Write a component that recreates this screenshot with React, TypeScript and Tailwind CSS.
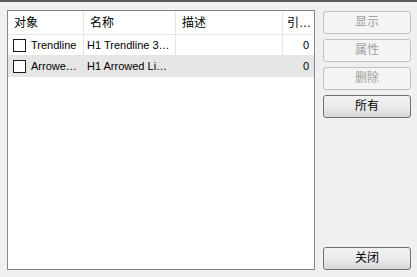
const FONT = "[font-family:Tahoma,'Liberation_Sans','Noto_Sans_CJK_SC',sans-serif]";

const ROWS = [
  { obj: "Trendline", name: "H1 Trendline 3…", desc: "", ref: "0", selected: false },
  { obj: "Arrowe…", name: "H1 Arrowed Li…", desc: "", ref: "0", selected: true }
];

const BUTTONS = [
  { label: "显示", enabled: false },
  { label: "属性", enabled: false },
  { label: "删除", enabled: false },
  { label: "所有", enabled: true }
];

export default function App() {
  return (
    <div
      className={`flex h-[277px] w-[417px] flex-col overflow-hidden border-t-2 border-[#5a5a5a] bg-[#f0f0f0] text-[12px] text-black ${FONT}`}
    >
      <div className="flex flex-1 gap-2 pt-2 pr-[6px] pb-[7px] pl-[7px]">
        <ObjectList />
        <div className="flex w-[88px] flex-col gap-[5px] pt-[1px]">
          {BUTTONS.map((b) => (
            <DialogButton key={b.label} label={b.label} enabled={b.enabled} />
          ))}
          <div className="flex-1" />
          <DialogButton label="关闭" enabled />
        </div>
      </div>
    </div>
  );
}

function ObjectList() {
  return (
    <div className="flex w-[308px] flex-col border border-[#828790] bg-white">
      <div className="flex h-[24px] border-b border-[#e5e5e5] leading-[24px]">
        <div className="w-[76px] border-r border-[#e5e5e5] pl-[6px]">对象</div>
        <div className="w-[92px] border-r border-[#e5e5e5] pl-[6px]">名称</div>
        <div className="w-[107px] border-r border-[#e5e5e5] pl-[6px]">描述</div>
        <div className="w-[31px] overflow-hidden text-ellipsis whitespace-nowrap pr-[2px] pl-[4px]">引用计数</div>
      </div>
      {ROWS.map((row) => (
        <div
          key={row.obj}
          className={`flex h-[21px] border-b border-[#e5e5e5] text-[11px] leading-[20px] ${
            row.selected ? "bg-[#e6e6e6]" : "bg-white"
          }`}
        >
          <div className="flex w-[76px] items-center gap-[5px] border-r border-[#e5e5e5] pl-[5px]">
            <span className="h-[13px] w-[13px] shrink-0 border border-[#1c1c1c] bg-white" />
            <span className="truncate">{row.obj}</span>
          </div>
          <div className="w-[92px] truncate border-r border-[#e5e5e5] pl-[3px]">{row.name}</div>
          <div className="w-[107px] border-r border-[#e5e5e5]">{row.desc}</div>
          <div className="w-[31px] pr-[5px] text-right">{row.ref}</div>
        </div>
      ))}
    </div>
  );
}

function DialogButton({ label, enabled }: { label: string; enabled: boolean }) {
  return (
    <button
      className={`h-[23px] w-full rounded-[3px] border text-[12px] leading-[21px] ${
        enabled
          ? "border-[#707070] bg-gradient-to-b from-[#f2f2f2] via-[#ebebeb] to-[#d6d6d6] text-black"
          : "border-[#c0c0c0] bg-[#f4f4f4] text-[#a0a0a0]"
      }`}
    >
      {label}
    </button>
  );
}
